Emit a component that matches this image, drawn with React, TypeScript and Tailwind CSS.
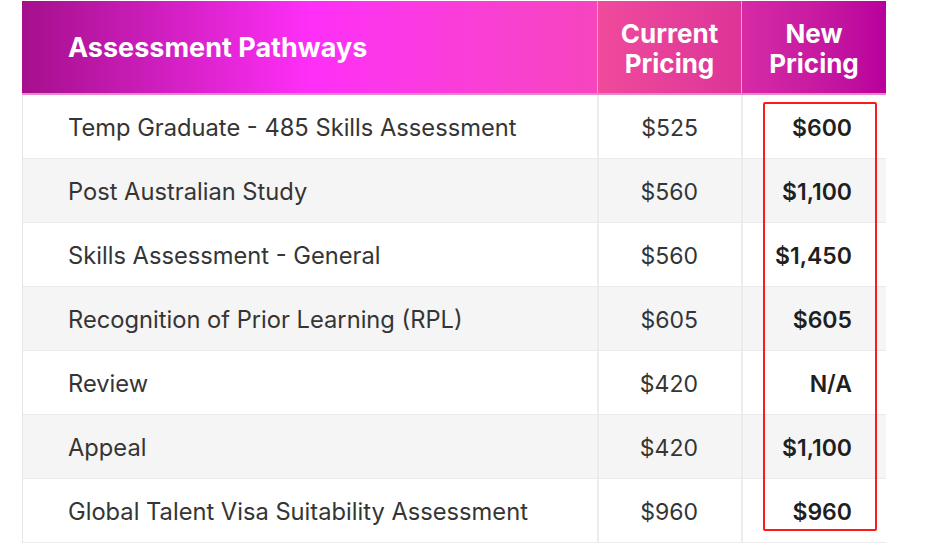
const rows = [
  { name: "Temp Graduate - 485 Skills Assessment", current: "$525", next: "$600" },
  { name: "Post Australian Study", current: "$560", next: "$1,100" },
  { name: "Skills Assessment - General", current: "$560", next: "$1,450" },
  { name: "Recognition of Prior Learning (RPL)", current: "$605", next: "$605" },
  { name: "Review", current: "$420", next: "N/A" },
  { name: "Appeal", current: "$420", next: "$1,100" },
  { name: "Global Talent Visa Suitability Assessment", current: "$960", next: "$960" },
];

export default function App() {
  return (
    <div className="w-[943px] h-[547px] bg-white overflow-hidden font-['Inter',sans-serif]">
      <div className="relative ml-[22px] mt-px w-[864px]">
        {/* Header */}
        <div className="flex h-[94px] text-white font-bold border-b-2 border-[#e887d0]">
          <div className="w-[576px] flex items-center pl-[46px] pt-[3px] text-[27px] bg-gradient-to-r from-[#a50f8c] via-[#ff2ef8] to-[#f645bd] border-r border-[#f49ad0]">
            Assessment Pathways
          </div>
          <div className="w-[144px] flex items-center justify-center pt-[3px] text-center text-[26px] leading-[30px] bg-gradient-to-r from-[#f04a9c] to-[#dd3498] border-r border-[#f3a2cf]">
            Current
            <br />
            Pricing
          </div>
          <div className="flex-1 flex items-center justify-center pt-[3px] text-center text-[26px] leading-[30px] bg-gradient-to-r from-[#d62aa6] to-[#b9009c]">
            New
            <br />
            Pricing
          </div>
        </div>

        {/* Body */}
        <div className="border-l border-[#e6e6e6]">
          {rows.map((row, i) => (
            <div
              key={row.name}
              className={`flex h-[64px] text-[23.7px] text-[#353535] border-b border-[#ececec] ${
                i % 2 === 1 ? "bg-[#f5f5f5]" : "bg-white"
              }`}
            >
              <div className="w-[576px] flex items-center pl-[45px] pt-[3px] border-r-2 border-[#ececec]">
                {row.name}
              </div>
              <div className="w-[144px] flex items-center justify-end pr-[43px] pt-[3px] text-[23px] border-r-2 border-[#ececec]">
                {row.current}
              </div>
              <div className="flex-1 flex items-center justify-end pr-[34px] pt-[3px] text-[23px] font-semibold text-[#1f1f1f]">
                {row.next}
              </div>
            </div>
          ))}
        </div>

        {/* Highlight box */}
        <div className="absolute left-[741px] top-[101px] w-[114px] h-[429px] border-2 border-[#ff1a1a] rounded-[2px]" />
      </div>
    </div>
  );
}
